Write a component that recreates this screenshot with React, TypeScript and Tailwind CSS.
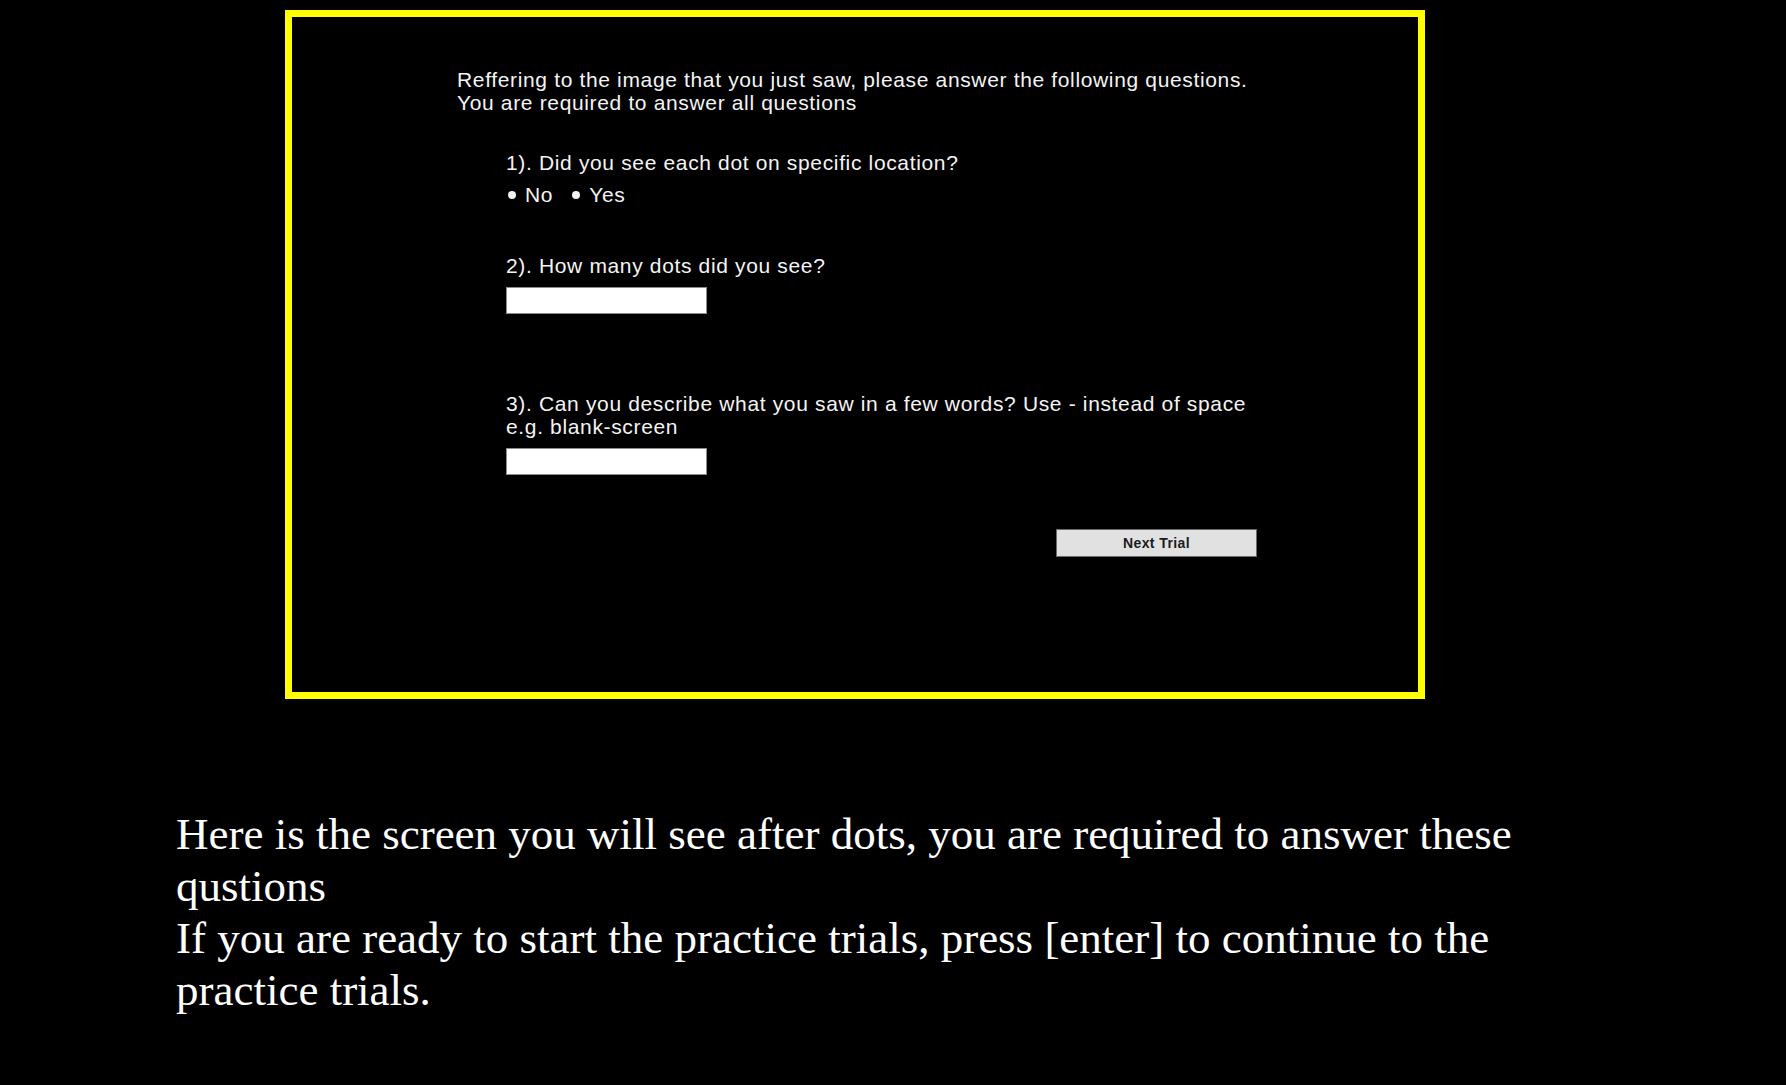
import React from 'react';

// Instruction screen: preview of the post-trial questionnaire inside a yellow frame,
// followed by the instruction text.

const boxFont = { fontFamily: '"Liberation Sans", Arial, sans-serif' };

function Radio({ label }: { label: string }) {
  return (
    <span className="flex items-center">
      <span className="mt-[1px] h-2 w-2 rounded-full bg-[#f2f2f2]" />
      <span className="ml-[9px]">{label}</span>
    </span>
  );
}

function TextBox() {
  return <div className="h-[27px] w-[201px] border border-[#8c8c8c] bg-white" />;
}

function QuestionPreview() {
  return (
    <div
      className="ml-[285px] h-[689px] w-[1140px] border-[7px] border-[#ffff00] bg-black pt-[51px] pl-[165px] text-[21px] leading-[23px] tracking-[0.65px] text-[#f4f4f4]"
      style={boxFont}
    >
      <p>
        Reffering to the image that you just saw, please answer the following questions.
        <br />
        You are required to answer all questions
      </p>

      <div className="mt-[37px] pl-[49px]">
        <p>1). Did you see each dot on specific location?</p>
        <div className="mt-[9px] flex items-center pl-[2px]">
          <Radio label="No" />
          <span className="ml-[19px]">
            <Radio label="Yes" />
          </span>
        </div>

        <p className="mt-[48px]">2). How many dots did you see?</p>
        <div className="mt-[10px]">
          <TextBox />
        </div>

        <p className="mt-[78px]">
          3). Can you describe what you saw in a few words? Use - instead of space
          <br />
          e.g. blank-screen
        </p>
        <div className="mt-[10px]">
          <TextBox />
        </div>

        <div className="mt-[54px] pl-[550px]">
          <button className="flex h-[28px] w-[201px] items-center justify-center border-[1.5px] border-[#6b6b6b] bg-[#e1e1e1] text-[14px] font-bold tracking-[0.4px] text-[#1c1c1c]">
            Next Trial
          </button>
        </div>
      </div>
    </div>
  );
}

export default function App() {
  return (
    <div className="min-h-[1085px] w-full bg-black pt-[10px]">
      <QuestionPreview />
      <div
        className="mt-[109px] w-[1600px] pl-[176px] text-[45px] leading-[52px] text-white"
        style={{ fontFamily: '"Liberation Serif", "Times New Roman", serif' }}
      >
        Here is the screen you will see after dots, you are required to answer these qustions
        <br />
        If you are ready to start the practice trials, press [enter] to continue to the practice
        trials.
      </div>
    </div>
  );
}
